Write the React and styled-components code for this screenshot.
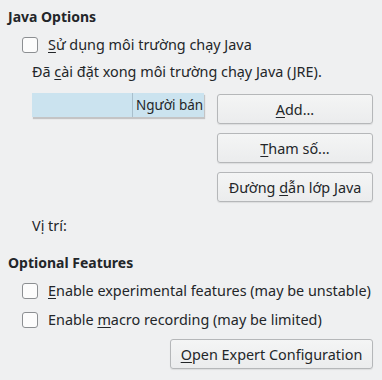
import React from 'react'
import styled, { createGlobalStyle } from "styled-components";

const Global = createGlobalStyle`
  html, body { margin:0; padding:0; background:#eff0f1; }
  body { font-family:"Noto Sans", "Open Sans", sans-serif; font-size:14.4px; color:#232629; }
`;

const Page = styled.div`
  width:382px;
  height:380px;
  box-sizing:border-box;
  padding:7px 9px 0 8px;
  display:flex;
  flex-direction:column;
`;
const Heading = styled.div`
  font-weight:bold;
  font-size:14px;
  height:20px;
  line-height:20px;
  margin-top:${({ $top }) => $top || 0}px;
`;
const Section = styled.div`
  padding-left:14px;
  display:flex;
  flex-direction:column;
`;
const CheckRow = styled.label`
  display:flex;
  align-items:center;
  gap:10px;
  height:29px;
  margin-top:${({ $top }) => $top || 0}px;
`;
const Box = styled.span`
  width:14px;
  height:14px;
  border:1px solid #8c8f92;
  border-radius:3px;
  background:#fcfcfc;
  flex:none;
`;
const U = styled.span`
  text-decoration:underline;
  text-underline-offset:2px;
`;
const Text = styled.div`
  padding-left:10px;
  height:26px;
  line-height:26px;
  margin-top:${({ $top }) => $top || 0}px;
`;
const Middle = styled.div`
  display:flex;
  justify-content:space-between;
  padding-left:10px;
  margin-top:8px;
`;
const Table = styled.div`
  width:172px;
  height:24px;
  background:#cbe3ef;
  display:flex;
  box-shadow:1px 2px 1px rgba(0,0,0,0.18);
`;
const Cell = styled.div`
  width:${({ $w }) => $w}px;
  border-right:${({ $line }) => $line ? '1px solid #a9bfcc' : 'none'};
  padding-left:3px;
  line-height:24px;
  font-size:13.5px;
  box-sizing:border-box;
  white-space:nowrap;
`;
const Buttons = styled.div`
  display:flex;
  flex-direction:column;
  gap:9px;
  width:156px;
  margin-top:1px;
`;
const Button = styled.button`
  height:30px;
  width:${({ $w }) => $w || 156}px;
  font-family:inherit;
  font-size:14.4px;
  color:#232629;
  border:1px solid #b5b7b9;
  border-radius:3px;
  background:linear-gradient(#f4f5f5, #ebeced);
  box-shadow:0 1px 1px rgba(0,0,0,0.08);
  padding:0;
  white-space:nowrap;
`;
const Footer = styled.div`
  display:flex;
  justify-content:flex-end;
  margin-top:5px;
`;

export default function App() {
  return (
    <>
      <Global />
      <Page>
        <Heading>Java Options</Heading>
        <Section>
          <CheckRow $top={3}><Box /><span><U>S</U>ử dụng môi trường chạy Java</span></CheckRow>
          <Text>Đã <U>c</U>ài đặt xong môi trường chạy Java (JRE).</Text>
          <Middle>
            <Table>
              <Cell $w={101} $line />
              <Cell $w={71}>Người bán</Cell>
            </Table>
            <Buttons>
              <Button><U>A</U>dd...</Button>
              <Button><U>T</U>ham số...</Button>
              <Button>Đường <U>d</U>ẫn lớp Java</Button>
            </Buttons>
          </Middle>
          <Text $top={11}>Vị trí:</Text>
        </Section>
        <Heading $top={14}>Optional Features</Heading>
        <Section>
          <CheckRow $top={3}><Box /><span><U>E</U>nable experimental features (may be unstable)</span></CheckRow>
          <CheckRow><Box /><span>Enable <U>m</U>acro recording (may be limited)</span></CheckRow>
        </Section>
        <Footer>
          <Button $w={203}><U>O</U>pen Expert Configuration</Button>
        </Footer>
      </Page>
    </>
  )
}
